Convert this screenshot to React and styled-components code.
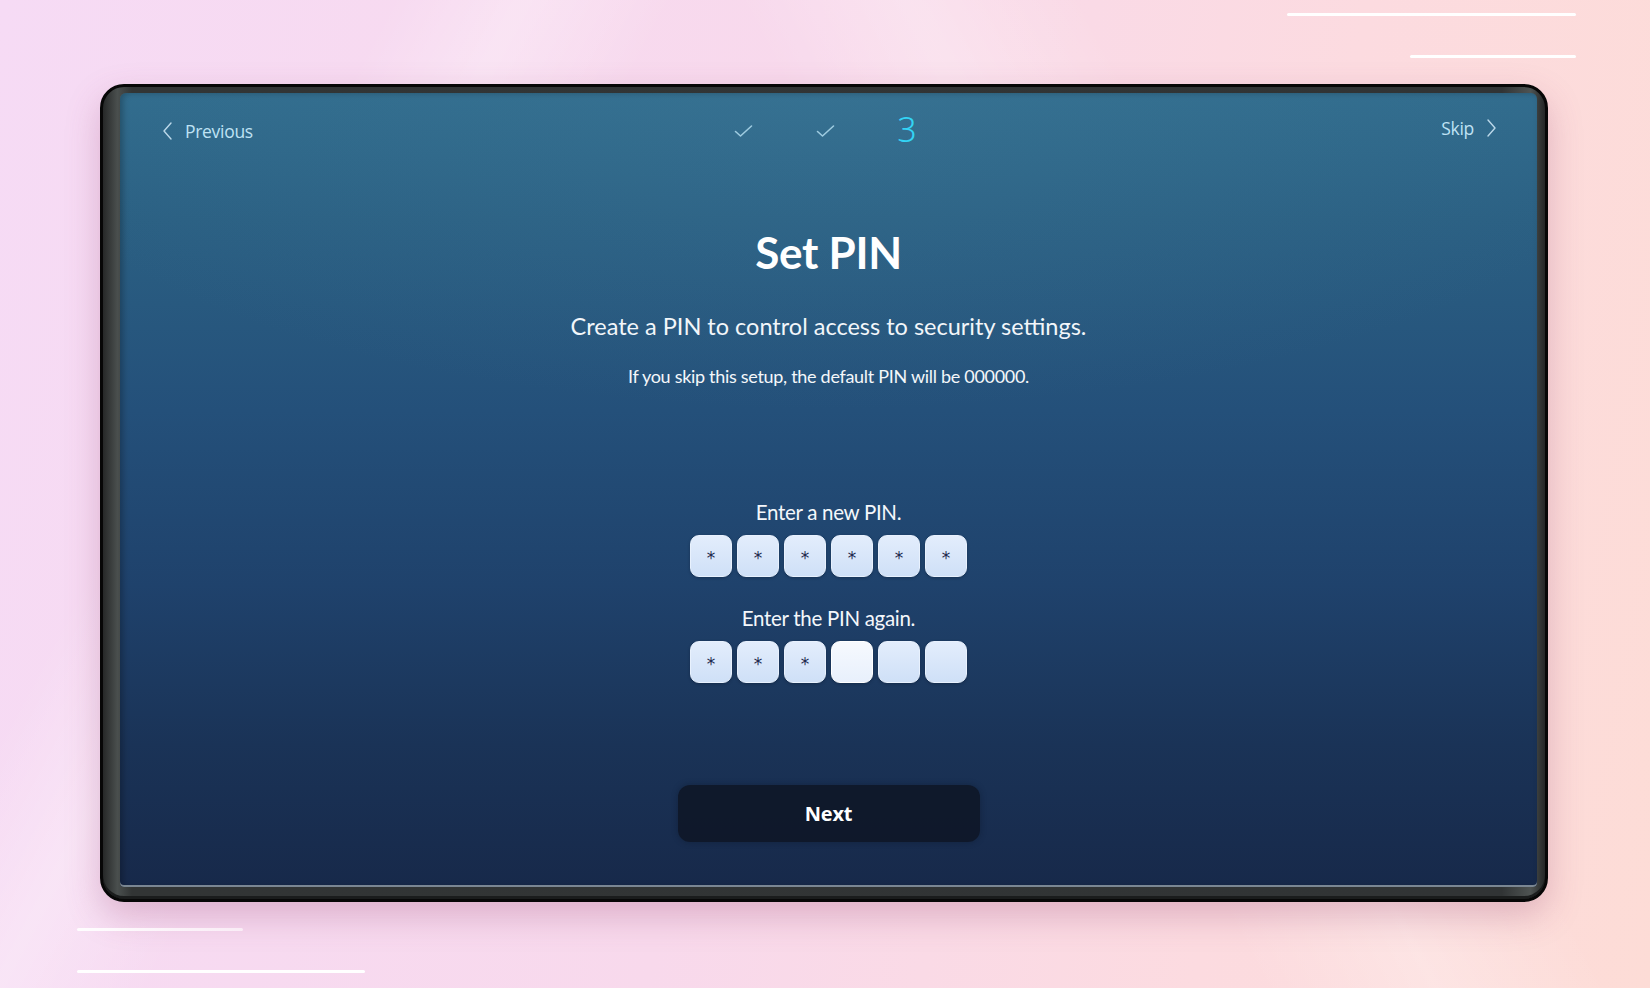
import React from "react";
import styled, { createGlobalStyle } from "styled-components";

const GlobalStyle = createGlobalStyle`
html, body {
    margin: 0;
    padding: 0;
}
body {
    font-family: Lato, "Open Sans", sans-serif;
}
`;

const Page = styled.div`
width: 1650px;
height: 988px;
box-sizing: border-box;
display: flex;
flex-direction: column;
overflow: hidden;
background:
    linear-gradient(118deg, rgba(255,255,255,0) 18%, rgba(255,255,255,0.28) 24%, rgba(255,255,255,0) 31%),
    linear-gradient(62deg, rgba(255,255,255,0) 58%, rgba(255,255,255,0.25) 66%, rgba(255,255,255,0) 74%),
    linear-gradient(100deg, #f6dbf5 0%, #f8d9ec 45%, #fcdbe0 75%, #fddcd6 100%);
`;

const DecorTop = styled.div`
height: 84px;
display: flex;
flex-direction: column;
align-items: flex-end;
padding: 13px 74px 0 0;
box-sizing: border-box;
gap: 39px;
`;

const DecorBottom = styled.div`
flex: 1;
display: flex;
flex-direction: column;
align-items: flex-start;
padding: 26px 0 0 77px;
box-sizing: border-box;
gap: 39px;
`;

const Line = styled.div`
width: ${p => p.$w}px;
height: 3px;
border-radius: 2px;
background: ${p => p.$faint
    ? "linear-gradient(90deg, rgba(255,255,255,0.95), rgba(255,255,255,0.6))"
    : "#ffffff"};
`;

const Frame = styled.div`
margin-left: 100px;
width: 1448px;
height: 818px;
box-sizing: border-box;
border: 3px solid #070707;
border-radius: 24px;
padding: 6px 8px 12px 17px;
background: linear-gradient(90deg, #262828 0%, #4a4f4e 1%, #323535 2%, #313435 97%, #4e5352 99%, #242626 100%);
box-shadow: 0 14px 34px rgba(150, 70, 110, 0.28), inset 0 -3px 0 #1a1c1c;
display: flex;
`;

const Screen = styled.div`
flex: 1;
border-radius: 6px 6px 4px 4px;
display: flex;
flex-direction: column;
align-items: center;
color: #ffffff;
background:
    radial-gradient(ellipse 60% 40% at 50% 0%, rgba(70,130,160,0.25), rgba(0,0,0,0)),
    linear-gradient(180deg, #316c8d 0%, #2b6083 16%, #24507a 40%, #1f426c 62%, #1a3357 82%, #17294a 100%);
box-shadow: inset 0 -2px 0 rgba(190,200,200,0.6), inset 3px 0 6px rgba(0,0,0,0.25);
`;

const Nav = styled.div`
width: 100%;
box-sizing: border-box;
padding: 20px 40px 0 42px;
height: 56px;
display: grid;
grid-template-columns: 1fr auto 1fr;
align-items: center;
`;

const NavLink = styled.div`
display: flex;
align-items: center;
gap: 12px;
justify-self: ${p => (p.$right ? "end" : "start")};
color: #bfe2f4;
font-family: "Open Sans", sans-serif;
font-size: 17.5px;
letter-spacing: -0.3px;
margin-top: ${p => (p.$right ? "-7px" : "0")};
`;

const Steps = styled.div`
display: flex;
align-items: center;
margin-right: 9px;
`;

const Step = styled.div`
width: 82px;
height: 36px;
display: flex;
align-items: center;
justify-content: center;
`;

const StepNumber = styled.span`
font-family: "Noto Sans", sans-serif;
font-weight: 300;
font-size: 34px;
line-height: 1;
color: #33d4f5;
margin-top: -4px;
`;

const Title = styled.h1`
margin: 77px 0 0;
font-size: 44px;
line-height: 52px;
font-weight: 700;
letter-spacing: -0.3px;
`;

const Subtitle = styled.p`
margin: 33px 0 0;
font-size: 23.5px;
line-height: 30px;
font-weight: 400;
color: #f2f6fa;
`;

const Note = styled.p`
margin: 24px 0 0;
font-size: 18px;
line-height: 22px;
color: #f4f7fa;
letter-spacing: -0.3px;
`;

const Label = styled.p`
margin: ${p => p.$top}px 0 0;
font-size: 20.5px;
line-height: 26px;
color: #f4f7fb;
letter-spacing: -0.3px;
`;

const PinRow = styled.div`
margin-top: 10px;
display: flex;
gap: 5px;
`;

const PinBox = styled.div`
width: 42px;
height: 42px;
border-radius: 9px;
box-sizing: border-box;
display: flex;
align-items: center;
justify-content: center;
color: #1c2a4c;
font-family: "DejaVu Sans", sans-serif;
font-size: 17px;
padding-top: 4px;
background: ${p => (p.$active
    ? "linear-gradient(180deg, #f6f9fe 0%, #e8f0fc 100%)"
    : "linear-gradient(180deg, #e3edfc 0%, #cfe0f7 100%)")};
border: 1px solid ${p => (p.$active ? "#ffffff" : "#e8f1fd")};
box-shadow: 0 1px 3px rgba(10, 20, 40, 0.35);
`;

const NextButton = styled.button`
margin-top: 102px;
width: 302px;
height: 57px;
border: none;
border-radius: 12px;
background: rgba(14, 21, 36, 0.85);
box-shadow: 0 0 6px rgba(10, 18, 32, 0.35);
color: #ffffff;
font-family: "Open Sans", sans-serif;
font-size: 20px;
font-weight: 700;
letter-spacing: -0.2px;
`;

function Chevron({ dir }) {
    const d = dir === "left" ? "M9 1 L2 9 L9 17" : "M2 1 L9 9 L2 17";
    return (
        <svg width="11" height="18" viewBox="0 0 11 18">
            <path d={d} fill="none" stroke="#bcd9ea" strokeWidth="1.4" strokeLinecap="round" strokeLinejoin="round" />
        </svg>
    );
}

function Check() {
    return (
        <svg width="19" height="14" viewBox="0 0 19 14">
            <path d="M1.5 7.5 L6.5 12 L17.5 2" fill="none" stroke="#9ecbe0" strokeWidth="1.6" strokeLinecap="round" strokeLinejoin="round" />
        </svg>
    );
}

function PinInput({ filled, active }) {
    return (
        <PinRow>
            {[0, 1, 2, 3, 4, 5].map(i => (
                <PinBox key={i} $active={i === active}>
                    {i < filled ? "*" : ""}
                </PinBox>
            ))}
        </PinRow>
    );
}

export default function App() {
    return (
        <Page>
            <GlobalStyle />
            <DecorTop>
                <Line $w={289} />
                <Line $w={166} />
            </DecorTop>
            <Frame>
                <Screen>
                    <Nav>
                        <NavLink>
                            <Chevron dir="left" />
                            Previous
                        </NavLink>
                        <Steps>
                            <Step><Check /></Step>
                            <Step><Check /></Step>
                            <Step><StepNumber>3</StepNumber></Step>
                        </Steps>
                        <NavLink $right>
                            Skip
                            <Chevron dir="right" />
                        </NavLink>
                    </Nav>
                    <Title>Set PIN</Title>
                    <Subtitle>Create a PIN to control access to security settings.</Subtitle>
                    <Note>If you skip this setup, the default PIN will be 000000.</Note>
                    <Label $top={112}>Enter a new PIN.</Label>
                    <PinInput filled={6} active={-1} />
                    <Label $top={28}>Enter the PIN again.</Label>
                    <PinInput filled={3} active={3} />
                    <NextButton>Next</NextButton>
                </Screen>
            </Frame>
            <DecorBottom>
                <Line $w={166} $faint />
                <Line $w={288} />
            </DecorBottom>
        </Page>
    );
}
